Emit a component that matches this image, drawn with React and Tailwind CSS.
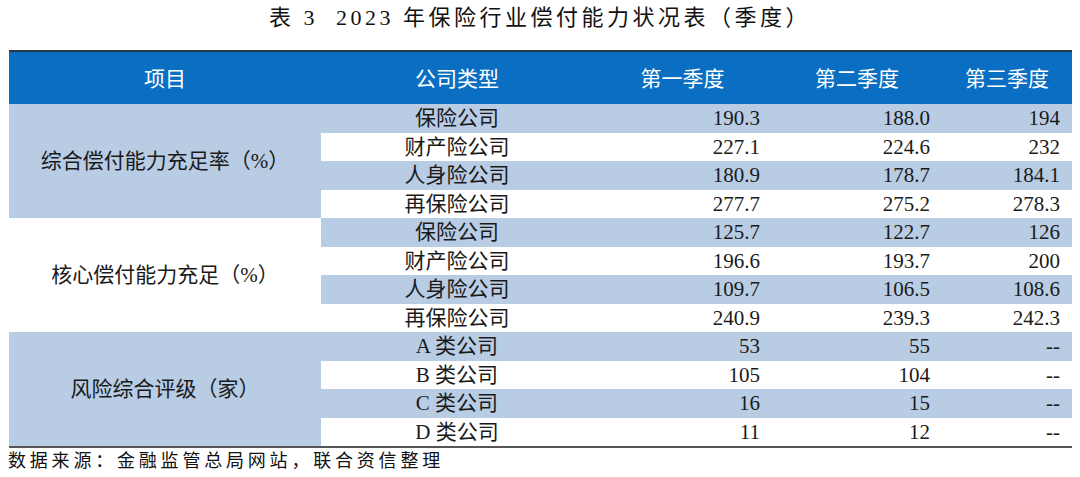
import React from "react";

const sections = [
  {
    label: "综合偿付能力充足率（%）",
    labelBg: "bg-[#b8cce4]",
    rows: [
      ["保险公司", "190.3", "188.0", "194"],
      ["财产险公司", "227.1", "224.6", "232"],
      ["人身险公司", "180.9", "178.7", "184.1"],
      ["再保险公司", "277.7", "275.2", "278.3"],
    ],
  },
  {
    label: "核心偿付能力充足（%）",
    labelBg: "bg-white",
    rows: [
      ["保险公司", "125.7", "122.7", "126"],
      ["财产险公司", "196.6", "193.7", "200"],
      ["人身险公司", "109.7", "106.5", "108.6"],
      ["再保险公司", "240.9", "239.3", "242.3"],
    ],
  },
  {
    label: "风险综合评级（家）",
    labelBg: "bg-[#b8cce4]",
    rows: [
      ["A 类公司", "53", "55", "--"],
      ["B 类公司", "105", "104", "--"],
      ["C 类公司", "16", "15", "--"],
      ["D 类公司", "11", "12", "--"],
    ],
  },
];

const heads = ["项目", "公司类型", "第一季度", "第二季度", "第三季度"];

const App = () => {
  return (
    <div className="w-[1080px] h-[477px] bg-white overflow-hidden text-[#1a1a1a] font-['Liberation_Serif','Noto_Sans_CJK_SC',serif]">
      <div className="pt-[4px] text-center text-[22px] leading-[28px] tracking-[3.5px] text-[#111]">
        表 3&nbsp; 2023 年保险行业偿付能力状况表（季度）
      </div>

      <table className="mt-[18px] ml-[9px] w-[1063px] table-fixed border-collapse">
        <colgroup>
          <col className="w-[312px]" />
          <col className="w-[272px]" />
          <col className="w-[179px]" />
          <col className="w-[170px]" />
          <col className="w-[130px]" />
        </colgroup>
        <thead>
          <tr className="h-[53px] bg-[#0a6fc2] border-t-2 border-[#27384a]">
            {heads.map((h) => (
              <th
                key={h}
                className="p-0 text-center font-normal text-[21px] text-white font-['Noto_Sans_CJK_SC',sans-serif]"
              >
                {h}
              </th>
            ))}
          </tr>
        </thead>
        <tbody className="border-b-2 border-[#555]">
          {sections.map((s) =>
            s.rows.map((r, i) => (
              <tr
                key={s.label + r[0]}
                className={
                  "h-[28.5px] text-[21px] leading-[28px] " +
                  (i % 2 == 0 ? "bg-[#b8cce4]" : "bg-white")
                }
              >
                {i == 0 && (
                  <td rowSpan={4} className={"p-0 text-center align-middle " + s.labelBg}>
                    {s.label}
                  </td>
                )}
                <td className="p-0 text-center">{r[0]}</td>
                <td className="p-0 pr-3 text-right">{r[1]}</td>
                <td className="p-0 pr-3 text-right">{r[2]}</td>
                <td className="p-0 pr-3 text-right">{r[3]}</td>
              </tr>
            ))
          )}
        </tbody>
      </table>

      <div className="pl-[8px] text-[18px] leading-[26px] tracking-[3.8px] text-[#111]">
        数据来源：金融监管总局网站，联合资信整理
      </div>
    </div>
  );
};

export default App;
